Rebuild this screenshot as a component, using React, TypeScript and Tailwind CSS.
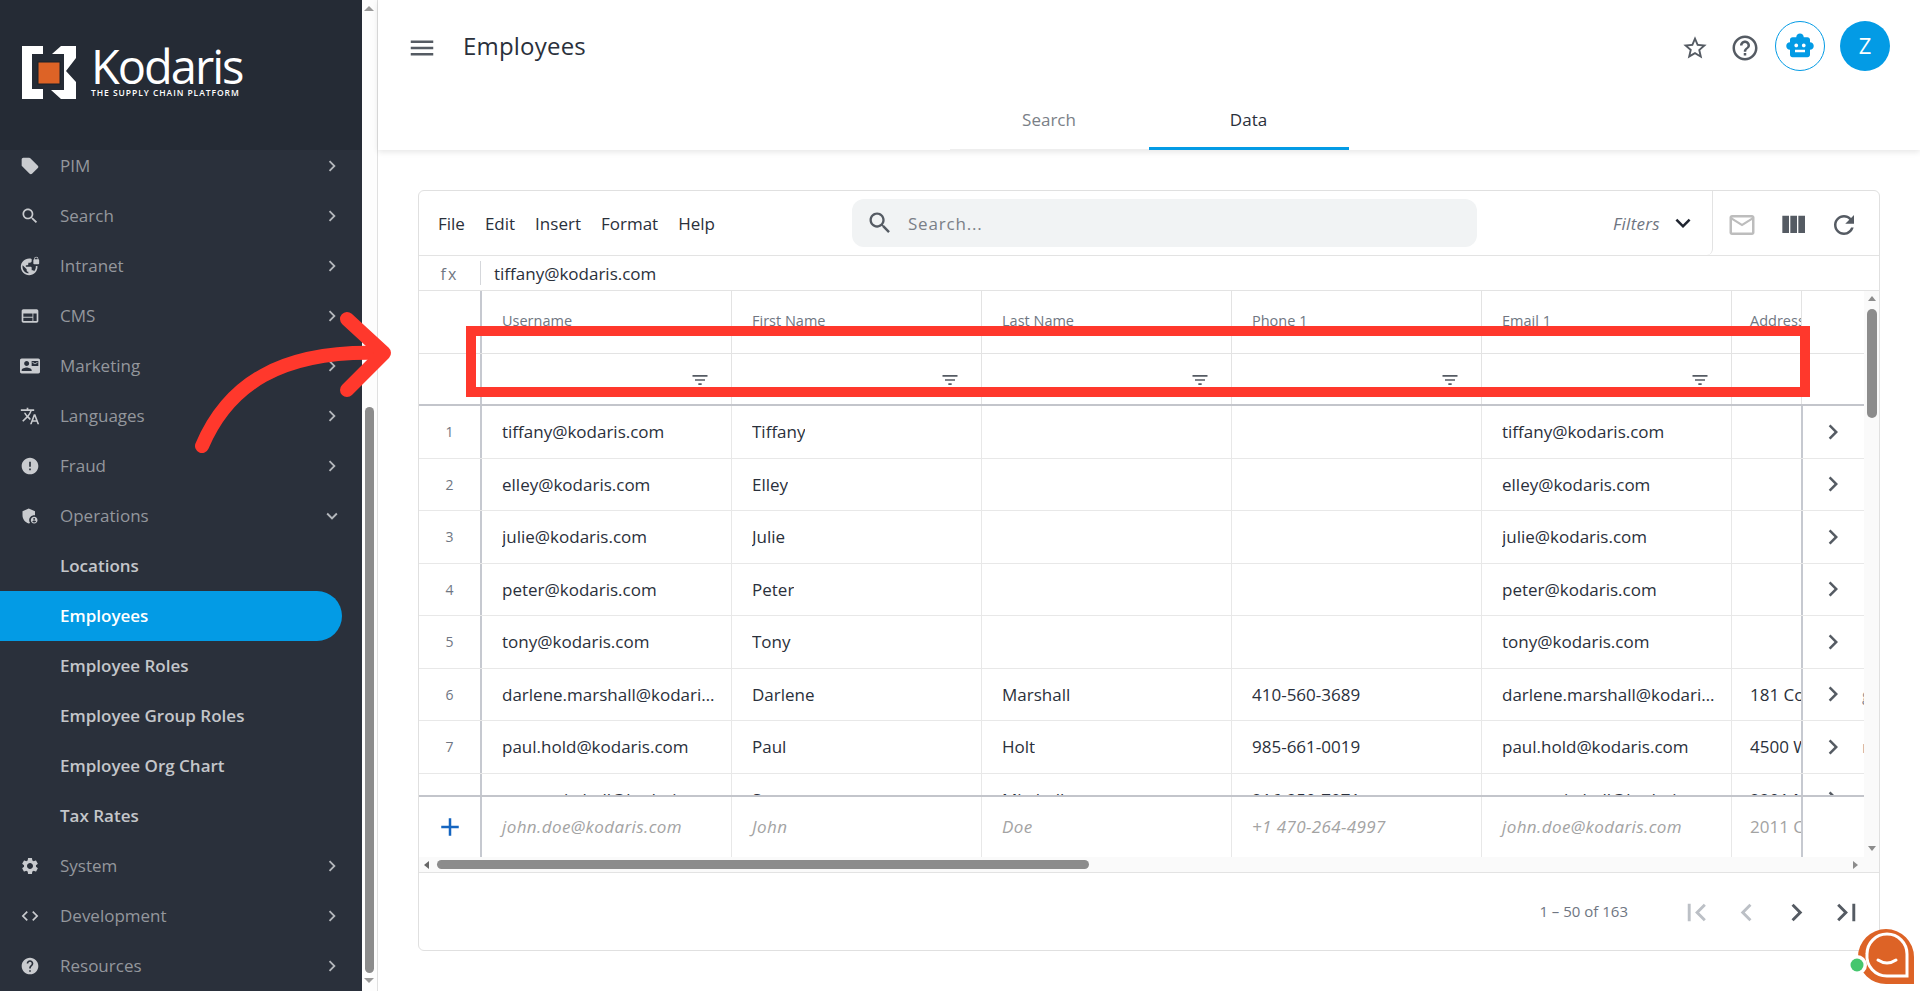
import React from "react";

const P = {
  offer: "M21.41 11.58l-9-9C12.05 2.22 11.55 2 11 2H4c-1.1 0-2 .9-2 2v7c0 .55.22 1.05.59 1.42l9 9c.36.36.86.58 1.41.58.55 0 1.05-.22 1.41-.59l7-7c.37-.36.59-.86.59-1.41 0-.55-.23-1.06-.59-1.42z",
  search: "M15.5 14h-.79l-.28-.27C15.41 12.59 16 11.11 16 9.5 16 5.91 13.09 3 9.5 3S3 5.91 3 9.5 5.91 16 9.5 16c1.61 0 3.09-.59 4.23-1.57l.27.28v.79l5 4.99L20.49 19l-4.99-5zm-6 0C7.01 14 5 11.99 5 9.5S7.01 5 9.5 5 14 7.01 14 9.5 11.99 14 9.5 14z",
  vpn: "M22 4v-.5C22 2.12 20.88 1 19.5 1S17 2.12 17 3.5V4c-.55 0-1 .45-1 1v4c0 .55.45 1 1 1h5c.55 0 1-.45 1-1V5c0-.55-.45-1-1-1zm-.8 0h-3.4v-.5c0-.94.76-1.7 1.7-1.7s1.7.76 1.7 1.7V4zm-2.28 8c.04.33.08.66.08 1 0 2.08-.8 3.97-2.1 5.39-.26-.81-1-1.39-1.9-1.39h-1v-3c0-.55-.45-1-1-1H7v-2h2c.55 0 1-.45 1-1V8h2c1.1 0 2-.9 2-2V3.46c-.95-.3-1.95-.46-3-.46C5.48 3 1 7.48 1 13s4.48 10 10 10 10-4.48 10-10c0-.34-.02-.67-.05-1h-2.03zM10 20.93c-3.95-.49-7-3.85-7-7.93 0-.62.08-1.21.21-1.79L8 16v1c0 1.1.9 2 2 2v1.93z",
  web: "M20 4H4c-1.1 0-2 .9-2 2v12c0 1.1.9 2 2 2h16c1.1 0 2-.9 2-2V6c0-1.1-.9-2-2-2zm-5 14H4v-4h11v4zm0-5H4V9h11v4zm5 5h-4V9h4v9z",
  contact: "M21 8V7l-3 2-3-2v1l3 2 3-2zm1-5H2C.9 3 0 3.9 0 5v14c0 1.1.9 2 2 2h20c1.1 0 1.99-.9 1.99-2L24 5c0-1.1-.9-2-2-2zM8 6c1.66 0 3 1.34 3 3s-1.34 3-3 3-3-1.34-3-3 1.34-3 3-3zm6 12H2v-1c0-2 4-3.1 6-3.1s6 1.1 6 3.1v1zm8-6h-8V6h8v6z",
  translate: "M12.87 15.07l-2.54-2.51.03-.03c1.74-1.94 2.98-4.17 3.71-6.53H17V4h-7V2H8v2H1v1.99h11.17C11.5 7.92 10.44 9.75 9 11.35 8.07 10.32 7.3 9.19 6.69 8h-2c.73 1.63 1.73 3.17 2.98 4.56l-5.09 5.02L4 19l5-5 3.11 3.11.76-2.04zM18.5 10h-2L12 22h2l1.12-3h4.75L21 22h2l-4.5-12zm-2.62 7l1.62-4.33L19.12 17h-3.24z",
  error: "M12 2C6.48 2 2 6.48 2 12s4.48 10 10 10 10-4.48 10-10S17.52 2 12 2zm1 15h-2v-2h2v2zm0-4h-2V7h2v6z",
  admin: "M17 11c.34 0 .67.04 1 .09V6.27L10.5 3 3 6.27v4.91c0 4.54 3.2 8.79 7.5 9.82.55-.13 1.08-.32 1.6-.55-.69-.98-1.1-2.17-1.1-3.45 0-3.31 2.69-6 6-6zM17 13c-2.21 0-4 1.79-4 4s1.79 4 4 4 4-1.79 4-4-1.79-4-4-4zm0 1.38c.62 0 1.12.51 1.12 1.12s-.51 1.12-1.12 1.12-1.12-.51-1.12-1.12.5-1.12 1.12-1.12zm0 5.37c-.93 0-1.74-.46-2.24-1.17.05-.72 1.51-1.08 2.24-1.08s2.19.36 2.24 1.08c-.5.71-1.31 1.17-2.24 1.17z",
  settings: "M19.14 12.94c.04-.3.06-.61.06-.94 0-.32-.02-.64-.07-.94l2.03-1.58c.18-.14.23-.41.12-.61l-1.92-3.32c-.12-.22-.37-.29-.59-.22l-2.39.96c-.5-.38-1.03-.7-1.62-.94l-.36-2.54c-.04-.24-.24-.41-.48-.41h-3.84c-.24 0-.43.17-.47.41l-.36 2.54c-.59.24-1.13.57-1.62.94l-2.39-.96c-.22-.08-.47 0-.59.22L2.74 8.87c-.12.21-.08.47.12.61l2.03 1.58c-.05.3-.09.63-.09.94s.02.64.07.94l-2.03 1.58c-.18.14-.23.41-.12.61l1.92 3.32c.12.22.37.29.59.22l2.39-.96c.5.38 1.03.7 1.62.94l.36 2.54c.05.24.24.41.48.41h3.84c.24 0 .44-.17.47-.41l.36-2.54c.59-.24 1.13-.56 1.62-.94l2.39.96c.22.08.47 0 .59-.22l1.92-3.32c.12-.22.07-.47-.12-.61l-2.01-1.58zM12 15.6c-1.98 0-3.6-1.62-3.6-3.6s1.62-3.6 3.6-3.6 3.6 1.62 3.6 3.6-1.62 3.6-3.6 3.6z",
  code: "M9.4 16.6L4.8 12l4.6-4.6L8 6l-6 6 6 6 1.4-1.4zm5.2 0l4.6-4.6-4.6-4.6L16 6l6 6-6 6-1.4-1.4z",
  help: "M12 2C6.48 2 2 6.48 2 12s4.48 10 10 10 10-4.48 10-10S17.52 2 12 2zm1 17h-2v-2h2v2zm2.07-7.75l-.9.92C13.45 12.9 13 13.5 13 15h-2v-.5c0-1.1.45-2.1 1.17-2.83l1.24-1.26c.37-.36.59-.86.59-1.41 0-1.1-.9-2-2-2s-2 .9-2 2H8c0-2.21 1.79-4 4-4s4 1.79 4 4c0 .88-.36 1.68-.93 2.25z",
  helpO: "M11 18h2v-2h-2v2zm1-16C6.48 2 2 6.48 2 12s4.48 10 10 10 10-4.48 10-10S17.52 2 12 2zm0 18c-4.41 0-8-3.59-8-8s3.59-8 8-8 8 3.59 8 8-3.59 8-8 8zm0-14c-2.21 0-4 1.79-4 4h2c0-1.1.9-2 2-2s2 .9 2 2c0 2-3 1.75-3 5h2c0-2.25 3-2.5 3-5 0-2.21-1.79-4-4-4z",
  star: "M22 9.24l-7.19-.62L12 2 9.19 8.63 2 9.24l5.46 4.73L5.82 21 12 17.27 18.18 21l-1.63-7.03L22 9.24zM12 15.4l-3.76 2.27 1-4.28-3.32-2.88 4.38-.38L12 6.1l1.71 4.04 4.38.38-3.32 2.88 1 4.28L12 15.4z",
  menu: "M3 18h18v-2H3v2zm0-5h18v-2H3v2zm0-7v2h18V6H3z",
  toy: "M20 9V7c0-1.1-.9-2-2-2h-3c0-1.66-1.34-3-3-3S9 3.34 9 5H6c-1.1 0-2 .9-2 2v2c-1.66 0-3 1.34-3 3s1.34 3 3 3v4c0 1.1.9 2 2 2h12c1.1 0 2-.9 2-2v-4c1.66 0 3-1.34 3-3s-1.34-3-3-3zM7.5 11.5c0-.83.67-1.5 1.5-1.5s1.5.67 1.5 1.5S9.83 13 9 13s-1.5-.67-1.5-1.5zM16 17H8v-2h8v2zm-1-4c-.83 0-1.5-.67-1.5-1.5S14.17 10 15 10s1.5.67 1.5 1.5S15.83 13 15 13z",
  mail: "M22 6c0-1.1-.9-2-2-2H4c-1.1 0-2 .9-2 2v12c0 1.1.9 2 2 2h16c1.1 0 2-.9 2-2V6zm-2 0l-8 5-8-5h16zm0 12H4V8l8 5 8-5v10z",
  cols: "M10 18h5V5h-5v13zm-6 0h5V5H4v13zM16 5v13h5V5h-5z",
  refresh: "M17.65 6.35C16.2 4.9 14.21 4 12 4c-4.42 0-7.99 3.58-7.99 8s3.57 8 7.99 8c3.73 0 6.84-2.55 7.73-6h-2.08c-.82 2.33-3.04 4-5.65 4-3.31 0-6-2.69-6-6s2.69-6 6-6c1.66 0 3.14.69 4.22 1.78L13 11h7V4l-2.35 2.35z",
  filter: "M10 18h4v-2h-4v2zM3 6v2h18V6H3zm3 7h12v-2H6v2z",
  next: "M10 6L8.59 7.41 13.17 12l-4.58 4.59L10 18l6-6z",
  prev: "M15.41 7.41L14 6l-6 6 6 6 1.41-1.41L10.83 12z",
  first: "M18.41 16.59L13.82 12l4.59-4.59L17 6l-6 6 6 6zM6 6h2v12H6z",
  last: "M5.59 7.41L10.18 12l-4.59 4.59L7 18l6-6-6-6zM16 6h2v12h-2z",
  down: "M16.59 8.59L12 13.17 7.41 8.59 6 10l6 6 6-6z",
  plus: "M19 13h-6v6h-2v-6H5v-2h6V5h2v6h6v2z",
};

function Ic({ d, className }: { d: string; className: string }) {
  return (
    <svg viewBox="0 0 24 24" fill="currentColor" className={className}>
      <path d={d} />
    </svg>
  );
}

function NavRow({ icon, label, open }: { icon: string; label: string; open?: boolean }) {
  return (
    <div className="flex h-[50px] shrink-0 items-center">
      <div className="flex w-[60px] justify-center">
        <Ic d={icon} className="h-5 w-5 text-[#c9cbcf]" />
      </div>
      <span className="flex-1 text-[17px] text-[#94979d]">{label}</span>
      <Ic d={open ? P.down : P.next} className="mr-[19px] h-[22px] w-[22px] text-[#b4b7bc]" />
    </div>
  );
}

function SubRow({ label, active }: { label: string; active?: boolean }) {
  return (
    <div
      className={
        active
          ? "flex h-[50px] w-[342px] shrink-0 items-center rounded-r-[25px] bg-[#039be5] pl-[60px] text-[17px] font-semibold text-white"
          : "flex h-[50px] shrink-0 items-center pl-[60px] text-[17px] font-semibold text-[#c4c6ca]"
      }
    >
      {label}
    </div>
  );
}

function Sidebar() {
  return (
    <aside className="flex h-full w-[362px] shrink-0 flex-col overflow-hidden bg-[#2a303b]">
      <div className="relative z-10 flex h-[150px] shrink-0 items-center gap-[15px] bg-[#252b35] pb-[6px] pl-[22px]">
        <svg viewBox="0 0 54 53" className="h-[53px] w-[54px]">
          <path fill="#fff" d="M0 0H21V8H10V43H21V53H0Z" />
          <path fill="#fff" d="M39 0H54V12L44 25L54 36V53H39L29 44H42V8H30Z" />
          <rect x="16" y="16" width="22" height="22" fill="#dd6326" stroke="#1b2029" strokeWidth="1" />
        </svg>
        <div className="flex flex-col text-white">
          <span className="text-[47px] leading-[38px] tracking-[-2px]">Kodaris</span>
          <span className="mt-[3px] text-[8.5px] font-semibold leading-[9px] tracking-[0.95px]">
            THE SUPPLY CHAIN PLATFORM
          </span>
        </div>
      </div>
      <nav className="-mt-[9px] flex flex-col">
        <NavRow icon={P.offer} label="PIM" />
        <NavRow icon={P.search} label="Search" />
        <NavRow icon={P.vpn} label="Intranet" />
        <NavRow icon={P.web} label="CMS" />
        <NavRow icon={P.contact} label="Marketing" />
        <NavRow icon={P.translate} label="Languages" />
        <NavRow icon={P.error} label="Fraud" />
        <NavRow icon={P.admin} label="Operations" open />
        <SubRow label="Locations" />
        <SubRow label="Employees" active />
        <SubRow label="Employee Roles" />
        <SubRow label="Employee Group Roles" />
        <SubRow label="Employee Org Chart" />
        <SubRow label="Tax Rates" />
        <NavRow icon={P.settings} label="System" />
        <NavRow icon={P.code} label="Development" />
        <NavRow icon={P.help} label="Resources" />
      </nav>
    </aside>
  );
}

function PageScrollbar() {
  return (
    <div className="flex h-full w-[16px] shrink-0 flex-col items-center border-r border-[#e0e0e0] bg-[#fdfdfd] pr-[1px]">
      <div className="mt-[6px] h-0 w-0 border-x-[5px] border-b-[5px] border-x-transparent border-b-[#9a9a9a]" />
      <div className="mt-[396px] h-[566px] w-[9px] rounded-full bg-[#8c8c8c]" />
      <div className="mt-[5px] h-0 w-0 border-x-[5px] border-t-[5px] border-x-transparent border-t-[#9a9a9a]" />
    </div>
  );
}

function TopBar() {
  return (
    <header className="relative z-10 flex h-[150px] shrink-0 flex-col bg-white shadow-[0_2px_6px_rgba(0,0,0,0.1)]">
      <div className="flex h-[95px] shrink-0 items-center pl-[29px] pr-[30px]">
        <Ic d={P.menu} className="h-[30px] w-[30px] text-[#555b63]" />
        <h1 className="ml-[26px] -translate-y-[2px] flex-1 text-[24px] tracking-[0.2px] text-[#2a303b]">Employees</h1>
        <div className="flex h-[50px] w-[50px] items-center justify-center">
          <Ic d={P.star} className="h-[28px] w-[28px] text-[#555b63]" />
        </div>
        <div className="flex h-[50px] w-[50px] items-center justify-center">
          <Ic d={P.helpO} className="h-[30px] w-[30px] text-[#555b63]" />
        </div>
        <div className="ml-[5px] flex h-[50px] w-[50px] -translate-y-[2px] items-center justify-center rounded-full border border-[#039be5]">
          <Ic d={P.toy} className="h-[30px] w-[30px] text-[#039be5]" />
        </div>
        <div className="ml-[15px] flex h-[50px] w-[50px] -translate-y-[2px] items-center justify-center rounded-full bg-[#039be5] text-[22px] text-white">
          Z
        </div>
      </div>
      <div className="flex flex-1 justify-center">
        <div className="flex w-[199px] items-center justify-center border-b border-[#eeeeee] pb-[4px] text-[17px] text-[#7a7f87]">
          Search
        </div>
        <div className="flex w-[200px] items-center justify-center border-b-[3px] border-[#039be5] pb-[2px] text-[17px] text-[#2a303b]">
          Data
        </div>
      </div>
    </header>
  );
}

const colW = "w-[250px]";

type Row = [string, string, string, string, string, string, string?];
const rows: Row[] = [
  ["tiffany@kodaris.com", "Tiffany", "", "", "tiffany@kodaris.com", ""],
  ["elley@kodaris.com", "Elley", "", "", "elley@kodaris.com", ""],
  ["julie@kodaris.com", "Julie", "", "", "julie@kodaris.com", ""],
  ["peter@kodaris.com", "Peter", "", "", "peter@kodaris.com", ""],
  ["tony@kodaris.com", "Tony", "", "", "tony@kodaris.com", ""],
  ["darlene.marshall@kodaris.com", "Darlene", "Marshall", "410-560-3689", "darlene.marshall@kodaris.com", "181 Cooper Rd", "g"],
  ["paul.hold@kodaris.com", "Paul", "Holt", "985-661-0019", "paul.hold@kodaris.com", "4500 West St", "n"],
  ["steve.mitchell@kodaris.com", "Steve", "Mitchell", "216-250-7071", "steve.mitchell@kodaris.com", "2201 Main St"],
];

function AddressCell({ text, className }: { text: string; className: string }) {
  return (
    <div className={"flex w-[69px] shrink-0 items-center overflow-hidden whitespace-nowrap pl-[18px] " + className}>
      {text}
    </div>
  );
}

function DataRow({ n, r }: { n: number; r: Row }) {
  return (
    <div className="flex h-[52.5px] shrink-0 border-b border-[#e8e8e8] text-[17px] text-[#2a303b]">
      <div className="flex w-[61px] shrink-0 items-center justify-center text-[14px] text-[#6f7682]">{n}</div>
      <div className="flex shrink-0 border-l-2 border-[#c6c9d0]">
        {r.slice(0, 5).map((c, i) => (
          <div key={i} className={"flex shrink-0 items-center border-r border-[#e8e8e8] pl-[20px] pr-[15px] " + colW}>
            <span className="truncate">{c}</span>
          </div>
        ))}
      </div>
      <AddressCell text={r[5]} className="" />
      <div className="flex flex-1 items-center border-l-2 border-[#c6c9d0] pl-[15px]">
        <Ic d={P.next} className="h-[30px] w-[30px] text-[#555b63]" />
        <div className="ml-auto w-[2px] overflow-hidden text-[#8a8f98]">{r[6]}</div>
      </div>
    </div>
  );
}

function Table() {
  return (
    <div className="flex min-w-0 flex-1 flex-col overflow-hidden">
      <div className="flex h-[63px] shrink-0 border-b border-[#e3e3e3] text-[14.5px] text-[#6f7682]">
        <div className="w-[61px] shrink-0" />
        <div className="flex shrink-0 border-l-2 border-[#c6c9d0]">
          {["Username", "First Name", "Last Name", "Phone 1", "Email 1"].map((h) => (
            <div key={h} className={"shrink-0 border-r border-[#e3e3e3] pl-[20px] pt-[19px] " + colW}>
              {h}
            </div>
          ))}
        </div>
        <div className="w-[69px] shrink-0 overflow-hidden whitespace-nowrap pl-[18px] pt-[19px]">Address 1</div>
        <div className="flex-1 border-l border-[#e3e3e3]" />
      </div>
      <div className="flex h-[52px] shrink-0 border-b-2 border-[#c3c5cb]">
        <div className="w-[61px] shrink-0" />
        <div className="flex shrink-0 border-l-2 border-[#c6c9d0]">
          {[0, 1, 2, 3, 4].map((i) => (
            <div key={i} className={"flex shrink-0 items-end justify-end border-r border-[#e3e3e3] pb-[14px] pr-[21px] " + colW}>
              <Ic d={P.filter} className="h-5 w-5 text-[#555b63]" />
            </div>
          ))}
        </div>
        <div className="w-[69px] shrink-0" />
        <div className="flex-1 border-l border-[#e3e3e3]" />
      </div>
      <div className="flex h-[389px] shrink-0 flex-col overflow-hidden">
        {rows.map((r, i) => (
          <DataRow key={i} n={i + 1} r={r} />
        ))}
      </div>
      <div className="flex h-[62px] shrink-0 border-t-2 border-[#c3c5cb] text-[17px] text-[#a3a3a3]">
        <div className="flex w-[61px] shrink-0 items-center justify-center">
          <Ic d={P.plus} className="h-[30px] w-[30px] text-[#1565c0]" />
        </div>
        <div className="flex shrink-0 border-l-2 border-[#c6c9d0]">
          {["john.doe@kodaris.com", "John", "Doe", "+1 470-264-4997", "john.doe@kodaris.com"].map((c, i) => (
            <div key={c + i} className={"flex shrink-0 items-center border-r border-[#e8e8e8] pl-[20px] italic tracking-[0.4px] " + colW}>
              {c}
            </div>
          ))}
        </div>
        <AddressCell text="2011 Cherry St" className="" />
        <div className="flex-1 border-l-2 border-[#c6c9d0]" />
      </div>
    </div>
  );
}

function Card() {
  return (
    <div className="flex h-[761px] flex-col overflow-hidden rounded-[6px] border border-[#e0e0e0] bg-white">
      <div className="flex h-[65px] shrink-0 border-b border-[#e3e3e3]">
        <div className="flex flex-1 items-center rounded-br-[6px] border-r border-[#e3e3e3] pl-[19px] pr-[14px]">
          <div className="flex w-[414px] shrink-0 gap-[20px] pt-[2px] text-[17px] text-[#2a303b]">
            <span>File</span>
            <span>Edit</span>
            <span>Insert</span>
            <span>Format</span>
            <span>Help</span>
          </div>
          <div className="flex h-[48px] w-[625px] shrink-0 items-center rounded-[12px] bg-[#f1f3f4] pl-[14px] text-[17px] tracking-[0.8px] text-[#7a7f87]">
            <Ic d={P.search} className="h-[28px] w-[28px] text-[#555b63]" />
            <span className="ml-[14px] pt-[2px]">Search...</span>
          </div>
          <span className="ml-auto pt-[2px] text-[17px] italic tracking-[0.3px] text-[#6f7682]">Filters</span>
          <Ic d={P.down} className="ml-[8px] h-[30px] w-[30px] text-[#1f2530]" />
        </div>
        <div className="flex w-[166px] shrink-0 items-center justify-center gap-[20px] pr-[6px] pt-[3px]">
          <Ic d={P.mail} className="h-[30px] w-[30px] text-[#bdbdbd]" />
          <Ic d={P.cols} className="h-[32px] w-[32px] text-[#555b63]" />
          <Ic d={P.refresh} className="h-[30px] w-[30px] text-[#555b63]" />
        </div>
      </div>
      <div className="flex h-[35px] shrink-0 items-center border-b border-[#e3e3e3] text-[17px] text-[#2a303b]">
        <span className="w-[61px] pt-[2px] text-center text-[16px] tracking-[2px] text-[#6f7682]">fx</span>
        <span className="flex h-[24px] items-center border-l border-[#d5d7db] pl-[13px] pt-[2px]">tiffany@kodaris.com</span>
      </div>
      <div className="flex h-[566px] shrink-0">
        <Table />
        <div className="flex w-[15px] shrink-0 flex-col items-center bg-[#fafafa]">
          <div className="mt-[5px] h-0 w-0 border-x-[4px] border-b-[5px] border-x-transparent border-b-[#8c8c8c]" />
          <div className="mt-[8px] h-[109px] w-[10px] rounded-full bg-[#8c8c8c]" />
          <div className="mt-auto mb-[6px] h-0 w-0 border-x-[4px] border-t-[5px] border-x-transparent border-t-[#8c8c8c]" />
        </div>
      </div>
      <div className="flex h-[16px] shrink-0 items-center border-b border-[#e3e3e3] bg-[#fafafa] pl-[5px] pr-[21px]">
        <div className="h-0 w-0 border-y-[4px] border-r-[5px] border-y-transparent border-r-[#666]" />
        <div className="ml-[8px] h-[9px] w-[652px] rounded-full bg-[#8c8c8c]" />
        <div className="ml-auto h-0 w-0 border-y-[4px] border-l-[5px] border-y-transparent border-l-[#8c8c8c]" />
      </div>
      <div className="flex flex-1 items-center pr-[15px]">
        <span className="ml-auto mr-[51px] text-[15px] text-[#6f7682]">1 – 50 of 163</span>
        <div className="flex gap-[15px] pt-[2px]">
          <Ic d={P.first} className="h-[35px] w-[35px] text-[#bcc0c6]" />
          <Ic d={P.prev} className="h-[35px] w-[35px] text-[#bcc0c6]" />
          <Ic d={P.next} className="h-[35px] w-[35px] text-[#555b63]" />
          <Ic d={P.last} className="h-[35px] w-[35px] text-[#555b63]" />
        </div>
      </div>
    </div>
  );
}

function Annotation() {
  return (
    <svg viewBox="0 0 1920 991" className="pointer-events-none absolute inset-0 z-20 h-[991px] w-[1920px]">
      <rect x="471" y="331" width="1334" height="61" fill="none" stroke="#ff382c" strokeWidth="10" />
      <path d="M202 446C228 385 280 350 380 353" fill="none" stroke="#ff382c" strokeWidth="14" strokeLinecap="round" />
      <path d="M347 319L384 353L347 390" fill="none" stroke="#ff382c" strokeWidth="14" strokeLinecap="round" strokeLinejoin="round" />
    </svg>
  );
}

function ChatBubble() {
  return (
    <svg viewBox="0 0 70 70" className="absolute bottom-0 right-0 z-30 h-[70px] w-[70px]">
      <path d="M8 36A28 28 0 0 1 64 36V63H36A28 28 0 0 1 8 36Z" fill="#dd6326" />
      <path d="M17 33A20 20 0 0 1 57 33V55H37A20 20 0 0 1 17 33Z" fill="none" stroke="#fff" strokeWidth="3" />
      <circle cx="7" cy="44" r="10" fill="#fff" />
      <circle cx="7" cy="44" r="6.5" fill="#45c66e" />
      <path d="M28 39Q37 45 46 39" fill="none" stroke="#fff" strokeWidth="3" strokeLinecap="round" />
    </svg>
  );
}

export default function App() {
  return (
    <div className="relative flex h-[991px] w-[1920px] overflow-hidden bg-white font-['Open_Sans','Lato',sans-serif]">
      <Sidebar />
      <PageScrollbar />
      <main className="flex min-w-0 flex-1 flex-col">
        <TopBar />
        <div className="px-[40px] pt-[40px]">
          <Card />
        </div>
      </main>
      <Annotation />
      <ChatBubble />
    </div>
  );
}
